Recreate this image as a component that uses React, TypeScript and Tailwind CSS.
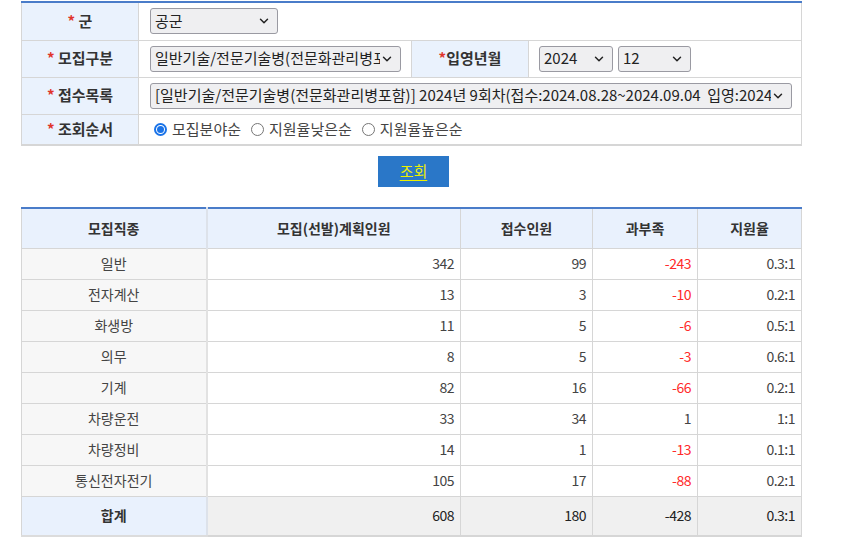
import { ChevronDown } from 'lucide-react';

const rows = [
  { name: '일반', plan: 342, apply: 99, diff: -243, rate: '0.3:1' },
  { name: '전자계산', plan: 13, apply: 3, diff: -10, rate: '0.2:1' },
  { name: '화생방', plan: 11, apply: 5, diff: -6, rate: '0.5:1' },
  { name: '의무', plan: 8, apply: 5, diff: -3, rate: '0.6:1' },
  { name: '기계', plan: 82, apply: 16, diff: -66, rate: '0.2:1' },
  { name: '차량운전', plan: 33, apply: 34, diff: 1, rate: '1:1' },
  { name: '차량정비', plan: 14, apply: 1, diff: -13, rate: '0.1:1' },
  { name: '통신전자전기', plan: 105, apply: 17, diff: -88, rate: '0.2:1' },
];

function Select({ value, className }: { value: string; className: string }) {
  return (
    <div
      className={`flex items-center h-[26px] pl-[4px] pr-[6px] border border-[#9a9aa2] rounded-[3px] bg-[#efeff1] text-[15px] text-[#222] ${className}`}
    >
      <span className="flex-1 overflow-hidden whitespace-pre">{value}</span>
      <ChevronDown className="w-[14px] h-[14px] shrink-0 text-[#222]" strokeWidth={2.5} />
    </div>
  );
}

function Label({ text, gap = true }: { text: string; gap?: boolean }) {
  return (
    <td className="bg-[#eaf2fd] border-r border-b border-[#d6d6d6] text-center font-bold text-[#333] text-[15px]">
      <span className="text-[#e0352b]">*</span>
      {gap && ' '}
      {text}
    </td>
  );
}

function Radio({ label, checked }: { label: string; checked?: boolean }) {
  return (
    <span className="flex items-center gap-[5px]">
      {checked ? (
        <span className="w-[13px] h-[13px] rounded-full border-2 border-[#1a73e8] flex items-center justify-center">
          <span className="w-[7px] h-[7px] rounded-full bg-[#1a73e8]" />
        </span>
      ) : (
        <span className="w-[13px] h-[13px] rounded-full border border-[#767676] bg-white" />
      )}
      <span>{label}</span>
    </span>
  );
}

export default function App() {
  const td = 'border-r border-b border-[#d6d6d6] text-right pr-[6px] text-[14px] tracking-[-0.5px]';
  return (
    <div
      className="w-[850px] h-[549px] bg-white text-[#444] overflow-hidden"
      style={{ fontFamily: '"Noto Sans CJK KR", "Noto Sans", sans-serif' }}
    >
      <div className="pl-[21px] pr-[48px] pt-[1px]">
        <table className="w-[781px] border-collapse border-t-2 border-t-[#4a7cc9] border-l border-l-[#d6d6d6] table-fixed">
          <colgroup>
            <col className="w-[117px]" />
            <col className="w-[273px]" />
            <col className="w-[117px]" />
            <col />
          </colgroup>
          <tbody>
            <tr className="h-[38px]">
              <Label text="군" />
              <td colSpan={3} className="border-r border-b border-[#d6d6d6] pl-[11px]">
                <Select value="공군" className="w-[128px]" />
              </td>
            </tr>
            <tr className="h-[37px]">
              <Label text="모집구분" />
              <td className="border-r border-b border-[#d6d6d6] pl-[11px] pr-[10px]">
                <Select value="일반기술/전문기술병(전문화관리병포함)" className="w-[251px]" />
              </td>
              <Label text="입영년월" gap={false} />
              <td className="border-r border-b border-[#d6d6d6] pl-[10px]">
                <div className="flex gap-[5px]">
                  <Select value="2024" className="w-[74px]" />
                  <Select value="12" className="w-[73px]" />
                </div>
              </td>
            </tr>
            <tr className="h-[37px]">
              <Label text="접수목록" />
              <td colSpan={3} className="border-r border-b border-[#d6d6d6] pl-[11px]">
                <Select
                  value="[일반기술/전문기술병(전문화관리병포함)] 2024년 9회차(접수:2024.08.28~2024.09.04  입영:2024년12월)"
                  className="w-[642px]"
                />
              </td>
            </tr>
            <tr className="h-[31px]">
              <td className="bg-[#eaf2fd] border-r border-b-2 border-[#d6d6d6] text-center font-bold text-[#333] text-[15px]">
                <span className="text-[#e0352b]">*</span> 조회순서
              </td>
              <td colSpan={3} className="border-r border-b-2 border-[#d6d6d6] pl-[15px] text-[15px] text-[#444]">
                <div className="flex gap-[10px]">
                  <Radio label="모집분야순" checked />
                  <Radio label="지원율낮은순" />
                  <Radio label="지원율높은순" />
                </div>
              </td>
            </tr>
          </tbody>
        </table>
      </div>

      <div className="flex justify-center mt-[10px]">
        <button className="ml-[-23px] w-[71px] h-[31px] bg-[#2a77c8] text-[#ecf000] underline underline-offset-[3px] text-[15px]">
          조회
        </button>
      </div>

      <div className="pl-[21px] mt-[20px]">
        <table className="w-[781px] border-collapse border-t-2 border-t-[#4a7cc9] border-l border-l-[#d6d6d6] table-fixed">
          <colgroup>
            <col className="w-[185px]" />
            <col className="w-[254px]" />
            <col className="w-[132px]" />
            <col className="w-[105px]" />
            <col />
          </colgroup>
          <thead>
            <tr className="h-[40px] bg-[#e9f1fd] text-[14px] font-bold text-[#333]">
              <th className="border-r-2 border-r-[#dde2ea] border-b border-b-[#d6d6d6]">모집직종</th>
              <th className="border-r border-b border-[#d6d6d6]">모집(선발)계획인원</th>
              <th className="border-r border-b border-[#d6d6d6]">접수인원</th>
              <th className="border-r border-b border-[#d6d6d6]">과부족</th>
              <th className="border-r border-b border-[#d6d6d6]">지원율</th>
            </tr>
          </thead>
          <tbody>
            {rows.map((r) => (
              <tr key={r.name} className="h-[31px]">
                <td className="bg-[#f7f7f7] border-r-2 border-r-[#e2e2e2] border-b border-b-[#d6d6d6] text-center text-[14px] text-[#444]">
                  {r.name}
                </td>
                <td className={td}>{r.plan}</td>
                <td className={td}>{r.apply}</td>
                <td className={`${td} ${r.diff < 0 ? 'text-[#ff2a2a]' : ''}`}>{r.diff}</td>
                <td className={td}>{r.rate}</td>
              </tr>
            ))}
            <tr className="h-[40px] bg-[#f0f0f0] text-[#222]">
              <td className="bg-[#e9f1fd] border-r-2 border-r-[#dde2ea] border-b-2 border-b-[#dcdcdc] text-center font-bold text-[14px] text-[#333]">
                합계
              </td>
              <td className={`${td} border-b-2`}>608</td>
              <td className={`${td} border-b-2`}>180</td>
              <td className={`${td} border-b-2`}>-428</td>
              <td className={`${td} border-b-2`}>0.3:1</td>
            </tr>
          </tbody>
        </table>
      </div>
    </div>
  );
}
